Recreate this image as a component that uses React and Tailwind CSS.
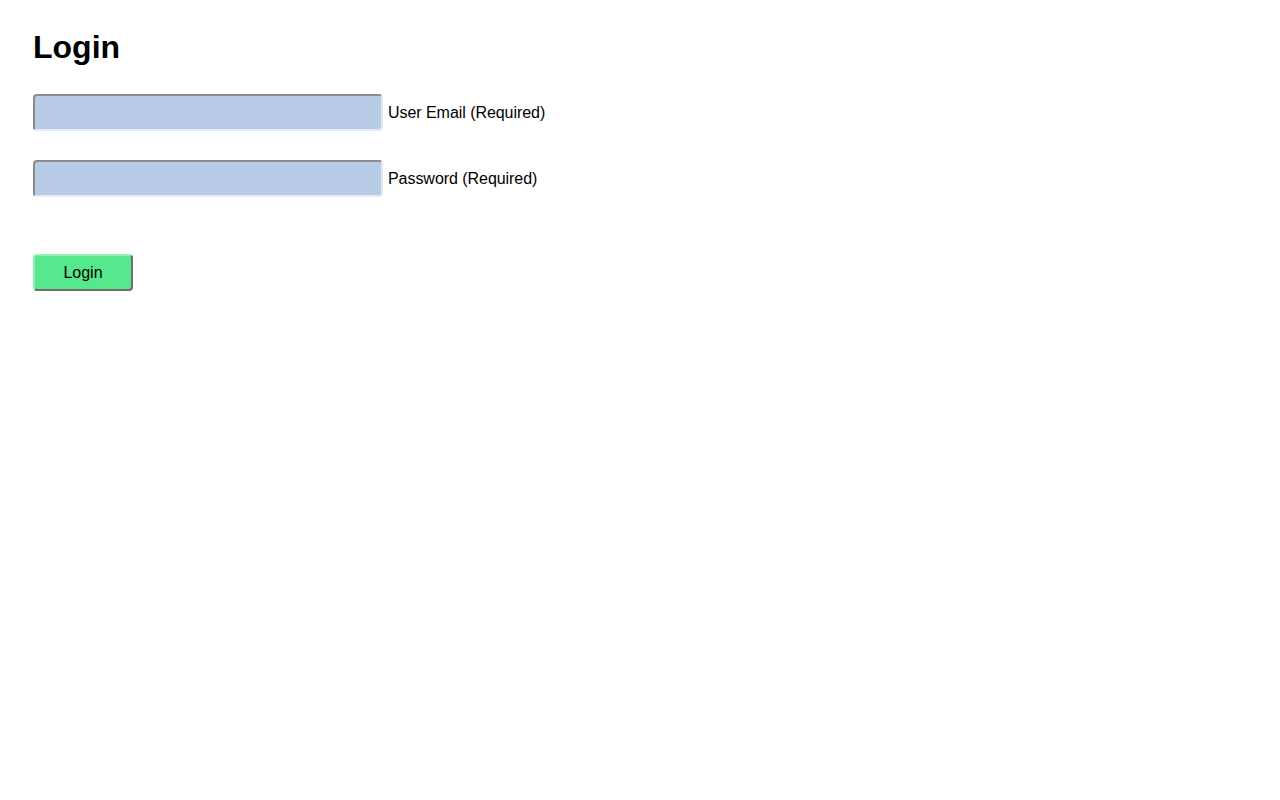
export default function App() {
  return (
    <div className="min-h-[800px] bg-white px-[33px] pt-[29px] font-['Liberation_Sans',Arial,sans-serif] text-black">
      <h1 className="m-0 text-[32px] font-bold leading-[37px]">Login</h1>
      <div className="mt-[28px] flex items-center gap-[5px]">
        <input
          type="email"
          className="h-[37px] w-[350px] rounded-[4px] border-2 border-t-[#8c8c8c] border-l-[#8c8c8c] border-b-[#e4eaf4] border-r-[#e4eaf4] bg-[#b8cce8] outline-none"
        />
        <label className="text-[16px] leading-[18px] tracking-[-0.05px]">User Email (Required)</label>
      </div>
      <div className="mt-[29px] flex items-center gap-[5px]">
        <input
          type="password"
          className="h-[37px] w-[350px] rounded-[4px] border-2 border-t-[#8c8c8c] border-l-[#8c8c8c] border-b-[#e4eaf4] border-r-[#e4eaf4] bg-[#b8cce8] outline-none"
        />
        <label className="text-[16px] leading-[18px] tracking-[-0.05px]">Password (Required)</label>
      </div>
      <div className="mt-[57px]">
        <button className="h-[37px] w-[100px] rounded-[4px] border-2 border-t-[#8ef0b0] border-l-[#8ef0b0] border-b-[#6e6e6e] border-r-[#6e6e6e] bg-[#56e88c] text-[16px] text-black">
          Login
        </button>
      </div>
    </div>
  );
}
